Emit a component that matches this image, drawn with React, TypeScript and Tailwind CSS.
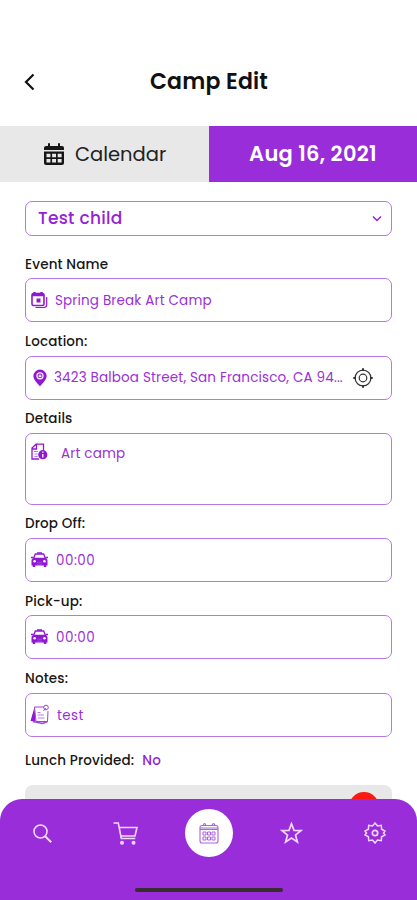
import type { ReactNode } from "react";

function EventIcon() {
  return (
    <svg width="17" height="18" viewBox="0 0 17 18" fill="none" stroke="#9118d3">
      <rect x="1" y="2.5" width="12" height="12" rx="1.5" strokeWidth="1.6" />
      <path d="M1 4h12M3.5 1v3M10.5 1v3" strokeWidth="2.4" />
      <rect x="5.5" y="7.5" width="4" height="4" fill="#9118d3" stroke="none" />
      <path d="M4.5 16.5h8.500q2.700 0 2.700-2.700V6" strokeWidth="1.200" />
    </svg>
  );
}

function PinIcon() {
  return (
    <svg width="14" height="18" viewBox="0 0 14 18">
      <path d="M7 .5A6.600 6.600 0 0 0 .4 7C.4 11 5 14.500 7 17.500c2-3 6.600-6.500 6.600-10.500A6.600 6.600 0 0 0 7 .5Z" fill="#9118d3" />
      <circle cx="7" cy="6.800" r="3.100" fill="#a945dc" stroke="#fff" strokeWidth="1.100" />
      <path d="M5.500 8 7 5.200l1.500 2.800Z" fill="#fff" />
    </svg>
  );
}

function DetailsIcon() {
  return (
    <svg width="17" height="18" viewBox="0 0 17 18" fill="none" stroke="#9118d3">
      <path d="M8 16H1V5l4-3.800h7.500V7M1 6h4.500V1.500" strokeWidth="1.300" />
      <path d="M3 8.500h4M3.500 11h3M3.500 13.500h3" strokeWidth="1" opacity=".6" />
      <circle cx="11.800" cy="11.700" r="4.600" fill="#9118d3" stroke="none" />
      <path d="M11.800 11v3.500M11.800 8.500v1.300" stroke="#fff" strokeWidth="1.300" />
    </svg>
  );
}

function CarIcon() {
  return (
    <svg className="-mt-[1px]" width="17" height="17" viewBox="0 0 17 17">
      <path d="m2.800 7 1.500-4h8.400l1.500 4" fill="none" stroke="#9118d3" strokeWidth="1.300" />
      <path d="M6 1.200h5v1.600H6ZM0 5.800h2.500v1.500H0ZM14.500 5.800H17v1.500h-2.500ZM2.500 6.700h12l2 2v5.800h-1.200v1.600h-2.500v-1.600H4.200v1.600H1.700v-1.600H.5V8.700Z" fill="#9118d3" />
      <circle cx="3.600" cy="10.200" r="1.300" fill="#fff" />
      <circle cx="13.400" cy="10.200" r="1.300" fill="#fff" />
      <path d="M6 11.300h5M6 13.200h5" stroke="#b35fe0" strokeWidth=".6" />
    </svg>
  );
}

function NotesIcon() {
  return (
    <svg className="-mt-[1px] shrink-0" width="20" height="21" viewBox="0 0 20 21" fill="none" stroke="#a040db">
      <path d="M4.500 3 .5 17l5 .5Z" fill="#9118d3" stroke="none" />
      <path d="M4.500 3h9.500M18 7l-.5 10.500H6L4.500 3" strokeWidth="1" />
      <path d="m3 17.500 9.500 2 5-2" strokeWidth="1.500" />
      <path d="M7.500 8.500h3M7.500 11h6.500M8 14h6.500" strokeWidth="1" opacity=".7" />
      <circle cx="16" cy="3.500" r="2.300" strokeWidth="1" />
      <path d="m13.500 7 2.200-3" />
    </svg>
  );
}

function TargetIcon() {
  return (
    <svg className="shrink-0" width="20" height="20" viewBox="0 0 20 20" fill="none" stroke="#333">
      <circle cx="10" cy="10" r="7.900" strokeWidth="1.300" />
      <circle cx="10" cy="10" r="3.800" strokeWidth="1.200" />
      <path d="M10 .3v2.500M10 17.200v2.500M.3 10h2.500M17.200 10h2.500" strokeWidth="2" />
    </svg>
  );
}

function CalendarSolid() {
  return (
    <svg width="20" height="23" viewBox="0 0 20 23">
      <path d="M0 7V5q0-2 2-2h2V1q0-1 1-1t1 1v2h8V1q0-1 1-1t1 1v2h2q2 0 2 2v2Z" fill="#161616" />
      <path d="M0 8.500h20V20q0 2-2 2H2q-2 0-2-2Z" fill="#161616" />
      <path d="M2.500 10.800h3.900v3.500H2.500ZM8.100 10.800H12v3.500H8.100ZM13.700 10.800h3.900v3.500h-3.900ZM2.500 16h3.900v3.500H2.500ZM8.100 16H12v3.500H8.100ZM13.700 16h3.900v3.500h-3.900Z" fill="#e8e8e8" />
    </svg>
  );
}

function CalendarTab() {
  return (
    <svg className="-mt-[1px]" width="20" height="22" viewBox="0 0 20 22" fill="none" stroke="#ad62df">
      <rect x="1" y="3.500" width="18" height="17.500" rx="2" strokeWidth="1.100" />
      <path d="M1 7.500h18M1 6h18" strokeWidth="1" />
      <path d="M4 3.500Q5.500-.5 7 3.500M13 3.500q1.500-4 3 0" strokeWidth="1.200" />
      <path d="M4 10h3v3H4ZM8.500 10h3v3h-3ZM13 10h3v3h-3ZM4 15h3v3H4ZM8.500 15h3v3h-3ZM13 15h3v3h-3Z" strokeWidth="1" />
    </svg>
  );
}

function Field({ label, icon, children, tall = false }: { label: string; icon: ReactNode; children: ReactNode; tall?: boolean }) {
  return (
    <div>
      <div className="flex h-[33.400px] items-center pt-[6px] text-[13.500px] font-medium tracking-[0.150px] text-[#161616]">{label}</div>
      <div className={`flex rounded-[7px] border border-[#b878e3] pl-[5px] text-[13.500px] tracking-[0.160px] text-[#9a30d8] ${tall ? "h-[71.500px] items-start pt-[9px]" : "h-[44px] items-center"}`}>
        <span className="flex w-[17px] shrink-0 justify-center">{icon}</span>
        {children}
      </div>
    </div>
  );
}

export default function App() {
  return (
    <div className="flex h-[900px] w-full flex-col overflow-hidden bg-white font-['Poppins','Inter',sans-serif] whitespace-nowrap">
      <header className="flex h-[126px] shrink-0 items-center pt-[37px] pl-[24px]">
        <svg width="11" height="18" viewBox="0 0 11 18" fill="none" stroke="#111" strokeWidth="2.200">
          <path d="M9.500 1.500 2 9l7.500 7.500" />
        </svg>
        <h1 className="ml-[115px] text-[22px] font-semibold tracking-[0.200px] text-[#111]">Camp Edit</h1>
      </header>
      <div className="flex h-[56px] shrink-0">
        <div className="flex w-[209px] items-center bg-[#e8e8e8] pl-[44px]">
          <CalendarSolid />
          <span className="mt-[2px] ml-[11px] text-[19.500px] text-[#222]">Calendar</span>
        </div>
        <div className="flex flex-1 items-center justify-center bg-[#982dd9] text-[21px] font-semibold tracking-[0.250px] text-white">Aug 16, 2021</div>
      </div>
      <main className="min-h-0 flex-1 overflow-hidden px-[25px] pt-[19px]">
        <div className="flex h-[35px] items-center justify-between rounded-[7px] border border-[#b878e3] pr-[9px] pl-[12px] text-[17px] font-medium tracking-[0.300px] text-[#9423d5]">
          <span>Test child</span>
          <svg width="10" height="8" viewBox="0 0 10 8" fill="none" stroke="#9423d5" strokeWidth="1.500">
            <path d="m1 1.500 4 4 4-4" />
          </svg>
        </div>
        <div className="pt-[9px]">
          <Field label="Event Name" icon={<EventIcon />}><span className="mt-[1px] ml-[7px]">Spring Break Art Camp</span></Field>
          <Field label="Location:" icon={<PinIcon />}>
            <span className="mt-[1px] mr-[10px] ml-[6px] w-[289px]">3423 Balboa Street, San Francisco, CA 94...</span>
            <TargetIcon />
          </Field>
          <Field label="Details" icon={<DetailsIcon />} tall><span className="mt-[1px] ml-[13px]">Art camp</span></Field>
          <Field label="Drop Off:" icon={<CarIcon />}><span className="mt-[2px] ml-[8px] tracking-[0.500px]">00:00</span></Field>
          <Field label="Pick-up:" icon={<CarIcon />}><span className="mt-[2px] ml-[8px] tracking-[0.500px]">00:00</span></Field>
          <Field label="Notes:" icon={<NotesIcon />}><span className="mt-[2px] ml-[9px] tracking-[0.400px]">test</span></Field>
        </div>
        <div className="flex h-[48.500px] items-center text-[13.500px] font-medium tracking-[0.150px] text-[#161616]">
          Lunch Provided:<span className="ml-[8px] text-[#9423d5]">No</span>
        </div>
        <div className="flex h-[60px] justify-end rounded-[8px] bg-[#e8e8e8] pt-[7px] pr-[13px]">
          <div className="size-[30px] rounded-full bg-[#fb1a12]" />
        </div>
      </main>
      <nav className="flex h-[101px] shrink-0 flex-col rounded-t-[22px] bg-[#982dd9]">
        <div className="flex h-[68px] items-center">
          <svg className="ml-[33px]" width="19" height="19" viewBox="0 0 19 19" fill="none" stroke="#f4d8ff">
            <circle cx="7.500" cy="7.500" r="6.500" strokeWidth="1.600" />
            <path d="m12.200 12.200 6 6" strokeWidth="2" />
          </svg>
          <svg className="ml-[61px]" width="25" height="25" viewBox="0 0 25 25" fill="none" stroke="#f4d8ff" strokeWidth="1.600">
            <path d="M.5 2h4.800l3 15.500h14M6.500 6.500H24l-2 8.500H8" />
            <circle cx="9" cy="21.800" r="2" fill="#f4d8ff" stroke="none" />
            <circle cx="20.500" cy="21.800" r="2" fill="#f4d8ff" stroke="none" />
          </svg>
          <div className="ml-[47px] flex size-[48px] items-center justify-center rounded-full bg-white"><CalendarTab /></div>
          <svg className="ml-[47px]" width="23" height="22" viewBox="0 0 23 22" fill="none" stroke="#f4d8ff" strokeWidth="1.700">
            <path d="m11.500 1.700 2.500 6.600 7 .3-5.500 4.400 1.900 7-5.900-4-5.900 4 1.900-7L2 8.600l7-.3Z" />
          </svg>
          <svg className="ml-[61px]" width="22" height="22" viewBox="0 0 22 22" fill="none" stroke="#f4d8ff" strokeWidth="1.500">
            <path d="m11 1 2.500 3 3.800-.7.300 3.900L21 9l-1.500 2 1.500 2-3.400 1.800-.3 3.900-3.800-.7L11 21l-2.500-3-3.800.7-.3-3.900L1 13l1.500-2L1 9l3.400-1.800.3-3.900 3.800.7Z" />
            <circle cx="11" cy="11" r="2.700" strokeWidth="1.700" />
          </svg>
        </div>
        <div className="mt-[21px] ml-[135px] h-[4px] w-[148px] rounded-full bg-[#392c31]" />
      </nav>
    </div>
  );
}
